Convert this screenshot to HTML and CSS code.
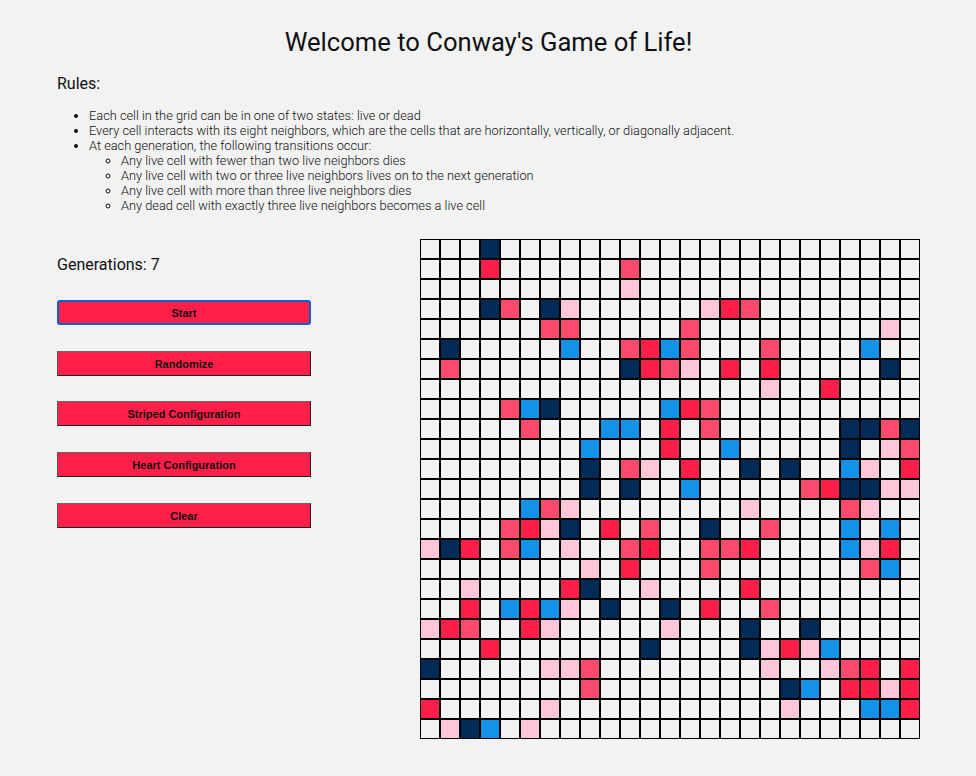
FILE: index.html
```html
<!DOCTYPE html>
<html lang="en">
<head>
<meta charset="utf-8">
<title>Conway's Game of Life</title>
<link rel="stylesheet" href="styles.css">
</head>
<body>
<div class="page">
  <h1 class="title">Welcome to Conway's Game of Life!</h1>
  <h2 class="rules-title">Rules:</h2>
  <ul class="rules">
    <li>Each cell in the grid can be in one of two states: live or dead</li>
    <li>Every cell interacts with its eight neighbors, which are the cells that are horizontally, vertically, or diagonally adjacent.</li>
    <li>At each generation, the following transitions occur:
      <ul class="subrules">
        <li>Any live cell with fewer than two live neighbors dies</li>
        <li>Any live cell with two or three live neighbors lives on to the next generation</li>
        <li>Any live cell with more than three live neighbors dies</li>
        <li>Any dead cell with exactly three live neighbors becomes a live cell</li>
      </ul>
    </li>
  </ul>
  <div class="game">
    <div class="controls">
      <p class="generations">Generations: 7</p>
      <button class="btn btn-focus">Start</button>
      <button class="btn">Randomize</button>
      <button class="btn">Striped Configuration</button>
      <button class="btn">Heart Configuration</button>
      <button class="btn">Clear</button>
    </div>
    <div class="grid" id="grid"></div>
  </div>
</div>
<script src="script.js"></script>
</body>
</html>
```

FILE: styles.css
```css
* { box-sizing: border-box; }

html, body {
  margin: 0;
  background: #f2f2f2;
}

body {
  font-family: Roboto, "Liberation Sans", sans-serif;
  color: #111;
}

.page {
  padding: 27px 56px 0 57px;
}

.title {
  margin: 0;
  font-size: 25.6px;
  line-height: 30px;
  font-weight: 400;
  text-align: center;
}

.rules-title {
  margin: 17px 0 0;
  font-size: 16px;
  line-height: 19px;
  font-weight: 400;
}

.rules {
  margin: 15px 0 0;
  padding-left: 32px;
  font-size: 12.8px;
  line-height: 15px;
  font-weight: 300;
  list-style: disc;
}

.subrules {
  margin: 0;
  padding-left: 32px;
  list-style: circle;
}

.game {
  margin-top: 26px;
  display: flex;
  justify-content: space-between;
  align-items: flex-start;
}

.controls {
  width: 254px;
  padding-top: 16px;
  display: flex;
  flex-direction: column;
  gap: 25.75px;
}

.generations {
  margin: 0;
  font-size: 16px;
  line-height: 19px;
  font-weight: 400;
}

.btn {
  height: 25px;
  width: 254px;
  padding: 1px 0 0;
  margin: 0;
  background: #ff1f48;
  border: 1px solid #222;
  border-top-color: #666;
  border-left-color: #555;
  font-family: "Liberation Sans", Arial, sans-serif;
  font-weight: 700;
  font-size: 11px;
  color: #111;
}

.btn-focus {
  border: 2px solid #1560c8;
  border-radius: 3px;
}

.grid {
  display: grid;
  grid-template-columns: repeat(25, 20px);
  grid-auto-rows: 20px;
  width: 500px;
}

.cell {
  border: 1px solid #000;
  background: #f2f2f2;
}

.cell-N { background: #022a57; }
.cell-R { background: #ff1e4a; }
.cell-M { background: #ff4a6e; }
.cell-L { background: #ffc6d9; }
.cell-B { background: #1492ea; }
```

FILE: script.js
```js
var rows = [
  "3N",
  "3R 10M",
  "10L",
  "3N 4M 6N 7L 14L 15R 16M",
  "6M 7M 13M 23L",
  "1N 7B 10M 11R 12B 13M 17M 22B",
  "1M 10N 11R 12M 13L 15R 17R 23N",
  "17L 20R",
  "4M 5B 6N 12B 13R 14M",
  "5M 9B 10B 12R 14M 21N 22N 23M 24N",
  "8B 12R 15B 21N 23L 24M",
  "8N 10M 11L 13R 16N 18N 21B 22L 24R",
  "8N 10N 13B 19M 20R 21N 22N 23L 24L",
  "5B 6M 7L 16L 21M 22L",
  "4M 5R 6L 7N 9R 11M 14N 17M 21B 23B",
  "0L 1N 2R 4M 5B 7L 10M 11R 14M 15M 16R 21B 22L 23R",
  "8L 10R 14M 22M 23B",
  "2L 7R 8N 11L 16R",
  "2R 4B 5R 6B 7L 9N 12N 14R 17M",
  "0L 1R 2M 5R 6L 12L 16N 19N",
  "3R 11N 16N 17L 18R 19L 20B",
  "0N 6L 7L 8M 17L 20L 21M 22R 24R",
  "8M 18N 19B 21R 22R 23L 24R",
  "0R 6L 18L 22B 23B 24R",
  "1L 2N 3B 5L"
];
var grid = document.getElementById("grid");
rows.forEach(function (spec) {
  var map = {};
  spec.split(" ").forEach(function (t) {
    if (!t) return;
    map[parseInt(t, 10)] = t.slice(-1);
  });
  for (var c = 0; c < 25; c++) {
    var d = document.createElement("div");
    d.className = "cell" + (map[c] ? " cell-" + map[c] : "");
    grid.appendChild(d);
  }
});
```
